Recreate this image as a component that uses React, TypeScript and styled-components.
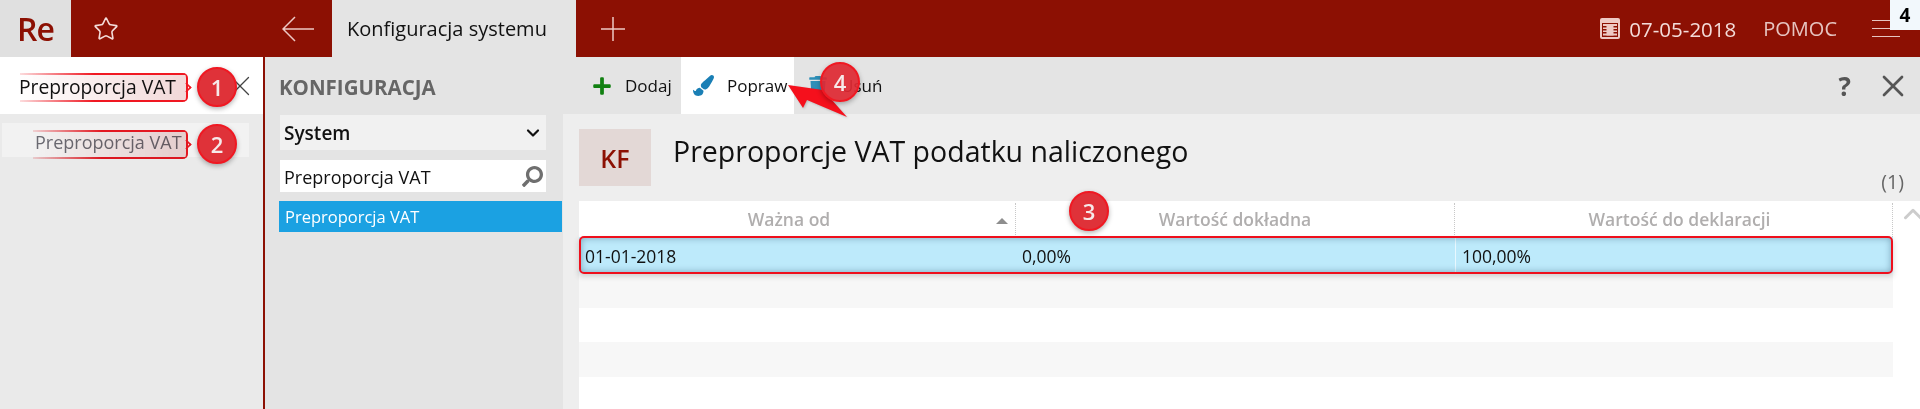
import React from 'react';
import styled, { createGlobalStyle } from 'styled-components';
import { ChevronDown, ChevronUp, Star, X } from 'lucide-react';
import { FaPaintBrush, FaPlus, FaSearch, FaTrash } from 'react-icons/fa';

const FONT = '"Open Sans", "Noto Sans", sans-serif';
const MAROON = '#8c1003';
const CALLOUT_RED = '#f01822';

const GlobalStyle = createGlobalStyle`
  html, body {
    margin: 0;
    padding: 0;
    height: 409px;
    overflow: hidden;
    background: #fff;
  }
  * { box-sizing: border-box; }
`;

const Page = styled.div`
  position: relative;
  width: 1920px;
  height: 409px;
  overflow: hidden;
  display: flex;
  flex-direction: column;
  font-family: ${FONT};
`;

const TopBar = styled.header`
  height: 57px;
  display: flex;
  align-items: center;
  flex-shrink: 0;
  background: ${MAROON};
  color: #f3dcd9;
`;

const Logo = styled.div`
  width: 71px;
  height: 100%;
  display: flex;
  align-items: center;
  justify-content: center;
  background: #e0e0e0;
  color: ${MAROON};
  font-size: 32px;
  font-weight: 600;
  letter-spacing: -1px;
`;

const StarSlot = styled.div`
  width: 70px;
  height: 100%;
  display: flex;
  align-items: center;
  justify-content: center;
  margin-right: 129px;
`;

const BackSlot = styled.div`
  width: 62px;
  height: 100%;
  display: flex;
  align-items: center;
  justify-content: center;
  padding-right: 7px;
`;

const Tab = styled.div`
  width: 244px;
  height: 100%;
  display: flex;
  align-items: center;
  padding-left: 15px;
  background: #e4e4e4;
  color: #111;
  font-size: 20px;
  font-weight: 400;
  white-space: nowrap;
`;

const PlusSlot = styled.div`
  width: 74px;
  height: 100%;
  display: flex;
  align-items: center;
  justify-content: center;
`;

const TopRight = styled.div`
  margin-left: auto;
  height: 100%;
  display: flex;
  align-items: center;
  position: relative;
`;

const DateText = styled.span`
  font-size: 20.5px;
  margin-left: 9px;
  margin-right: 27px;
`;

const HelpLink = styled.span`
  font-size: 20px;
  color: #e6c4c0;
  margin-right: 35px;
`;

const Burger = styled.div`
  width: 28px;
  margin-right: 20px;
  display: flex;
  flex-direction: column;
  gap: 6.5px;
  & > i {
    display: block;
    height: 1.5px;
    background: #e6c4c0;
  }
`;

const CornerMark = styled.div`
  position: absolute;
  top: 0;
  right: 0;
  width: 30px;
  height: 30px;
  display: flex;
  align-items: center;
  justify-content: center;
  background: #f2f8fc;
  color: #000;
  font-size: 19px;
  font-weight: 700;
`;

const Body = styled.div`
  flex: 1;
  display: flex;
  min-height: 0;
`;

const LeftPanel = styled.aside`
  width: 265px;
  flex-shrink: 0;
  background: #eaeaea;
  border-right: 2px solid ${MAROON};
`;

const LeftSearch = styled.div`
  height: 57px;
  display: flex;
  align-items: center;
  justify-content: space-between;
  padding: 1px 6px 0 19px;
  background: #fff;
  color: #111;
  font-size: 19.3px;
  white-space: nowrap;
`;

const LeftResult = styled.div`
  height: 34px;
  margin: 9px 14px 0 2px;
  padding: 3px 0 0 33px;
  display: flex;
  align-items: center;
  background: #f2f2f2;
  color: #6a6a72;
  font-size: 18px;
`;

const MiddlePanel = styled.nav`
  width: 298px;
  flex-shrink: 0;
  padding: 0 1px 0 14px;
  background: #e4e4e4;
`;

const PanelTitle = styled.div`
  height: 58px;
  padding-top: 2px;
  display: flex;
  align-items: center;
  font-size: 20.5px;
  font-weight: 700;
  color: #666;
`;

const SystemSelect = styled.div`
  width: 266px;
  height: 35px;
  display: flex;
  align-items: center;
  justify-content: space-between;
  padding: 1px 3px 0 4px;
  margin-left: 1px;
  background: #f1f1f1;
  color: #111;
  font-size: 19px;
  font-weight: 600;
`;

const TreeSearch = styled.div`
  width: 266px;
  height: 32px;
  margin: 10px 0 9px 1px;
  padding: 1px 3px 0 4px;
  display: flex;
  align-items: center;
  justify-content: space-between;
  background: #fff;
  color: #111;
  font-size: 18px;
`;

const TreeItem = styled.div`
  height: 31px;
  display: flex;
  align-items: center;
  padding-left: 6px;
  background: #1ba1e2;
  color: #fff;
  font-size: 16.5px;
`;

const Main = styled.main`
  flex: 1;
  min-width: 0;
  display: flex;
  flex-direction: column;
  background: #eeeeee;
`;

const Toolbar = styled.div`
  height: 57px;
  flex-shrink: 0;
  display: flex;
  align-items: stretch;
  background: #e4e4e4;
  padding-left: 18px;
`;

const ToolButton = styled.div<{ $active?: boolean; $width: number; $inset: number }>`
  width: ${(p) => p.$width}px;
  display: flex;
  align-items: center;
  gap: 13px;
  padding-left: ${(p) => p.$inset}px;
  background: ${(p) => (p.$active ? '#fff' : 'transparent')};
  color: #111;
  font-size: 17px;
`;

const ToolEnd = styled.div`
  margin-left: auto;
  display: flex;
  align-items: center;
  gap: 24px;
  padding-right: 9px;
  color: #555;
  font-size: 26px;
  font-weight: 700;
`;

const Heading = styled.div`
  height: 72px;
  flex-shrink: 0;
  display: flex;
  align-items: center;
  gap: 22px;
  padding: 15px 0 0 16px;
`;

const Monogram = styled.div`
  width: 72px;
  height: 57px;
  display: flex;
  align-items: center;
  justify-content: center;
  background: #e3d8d6;
  color: ${MAROON};
  font-size: 25px;
  font-weight: 600;
`;

const Title = styled.h1`
  margin: 0 0 13px;
  color: #111;
  font-size: 28.5px;
  font-weight: 400;
  white-space: nowrap;
`;

const CountRow = styled.div`
  height: 29px;
  margin-top: -14px;
  display: flex;
  align-items: flex-start;
  justify-content: flex-end;
  padding-right: 16px;
  line-height: 20px;
  color: #666;
  font-size: 19.5px;
`;

const TableWrap = styled.div`
  flex: 1;
  display: flex;
  margin-left: 16px;
  min-height: 0;
  background: #fff;
`;

const Table = styled.div`
  position: relative;
  width: 1314px;
  flex-shrink: 0;
`;

const Grid = styled.div<{ $h: number; $tint?: boolean; $selected?: boolean }>`
  display: grid;
  grid-template-columns: 437px 439px 438px;
  height: ${(p) => p.$h}px;
  background: ${(p) => (p.$selected ? '#bdeafb' : p.$tint ? '#f7f7f7' : '#fff')};
`;

const HeadCell = styled.div<{ $shift?: number }>`
  position: relative;
  display: flex;
  align-items: center;
  justify-content: center;
  padding-left: ${(p) => (p.$shift && p.$shift > 0 ? p.$shift : 0)}px;
  padding-right: ${(p) => (p.$shift && p.$shift < 0 ? -p.$shift : 0)}px;
  padding-bottom: 2px;
  color: #b0aeae;
  font-size: 17.5px;
  font-weight: 600;
  margin-top: 2px;
  border-right: 1px dotted #c8c8c8;
`;

const SortMark = styled.span`
  position: absolute;
  right: 7px;
  top: 15px;
  width: 0;
  height: 0;
  border-left: 6px solid transparent;
  border-right: 6px solid transparent;
  border-bottom: 6px solid #8e8e8e;
`;

const Cell = styled.div<{ $rule?: boolean }>`
  display: flex;
  align-items: center;
  padding: 2px 0 0 6px;
  color: #111;
  font-size: 17.5px;
  border-left: ${(p) => (p.$rule ? '1px solid #e8f8ff' : 'none')};
`;

const SelectedRow = styled(Grid)`
  position: relative;
  box-shadow: 0 3px 6px rgba(0, 0, 0, 0.18);
  z-index: 1;
  &::after {
    content: '';
    position: absolute;
    inset: -1px 0 -1px 0;
    border: 2px solid #ee0f1c;
    border-radius: 5px;
    box-shadow: inset 0 0 7px rgba(0, 40, 70, 0.35);
  }
`;

const ScrollSide = styled.div`
  flex: 1;
  display: flex;
  align-items: flex-start;
  justify-content: center;
  padding-left: 5px;
  color: #cccccc;
`;

const ScrollUp = styled(ChevronUp)`
  margin-top: -2px;
`;

const Badge = styled.div<{ $x: number; $y: number; $faded?: boolean }>`
  position: absolute;
  left: ${(p) => p.$x - 20}px;
  top: ${(p) => p.$y - 20}px;
  width: 40px;
  height: 40px;
  display: flex;
  align-items: center;
  justify-content: center;
  border-radius: 50%;
  border: 2px solid ${CALLOUT_RED};
  background: ${(p) => (p.$faded ? 'rgba(222, 40, 50, 0.92)' : '#df3239')};
  box-shadow: 0 2px 5px rgba(0, 0, 0, 0.3);
  color: #f6eaea;
  font-size: 22px;
  font-weight: 600;
  z-index: 5;
`;

const Callout = styled.div<{ $x: number; $y: number; $w: number }>`
  position: absolute;
  left: ${(p) => p.$x}px;
  top: ${(p) => p.$y}px;
  width: ${(p) => p.$w}px;
  height: 29px;
  border-right: 2px solid ${CALLOUT_RED};
  border-radius: 0 5px 5px 0;
  background:
    linear-gradient(90deg, rgba(240, 24, 34, 0.15), ${CALLOUT_RED} 45%) top / 100% 2px no-repeat,
    linear-gradient(90deg, rgba(240, 24, 34, 0.15), ${CALLOUT_RED} 45%) bottom / 100% 2px no-repeat,
    linear-gradient(90deg, rgba(240, 170, 170, 0), rgba(236, 200, 200, 0.7));
  mix-blend-mode: multiply;
  z-index: 4;
  &::after {
    content: '';
    position: absolute;
    right: -5px;
    top: 10px;
    width: 7px;
    height: 7px;
    border-top: 2px solid ${CALLOUT_RED};
    border-right: 2px solid ${CALLOUT_RED};
    transform: rotate(45deg) scale(0.8);
  }
`;

const ArrowLayer = styled.svg`
  position: absolute;
  left: 780px;
  top: 78px;
  z-index: 4;
  filter: drop-shadow(1px 1px 1px rgba(0, 0, 0, 0.2));
`;

function ThinArrow() {
  return (
    <svg width="32" height="26" viewBox="0 0 32 26" fill="none" stroke="#edc9c5" strokeWidth="1.5">
      <path d="M1 13H32M13 1 1 13l12 12" />
    </svg>
  );
}

function ThinPlus() {
  return (
    <svg width="24" height="24" viewBox="0 0 24 24" fill="none" stroke="#edc9c5" strokeWidth="1.5">
      <path d="M12 0v24M0 12h24" />
    </svg>
  );
}

function CalendarIcon() {
  return (
    <svg width="20" height="21" viewBox="0 0 20 21">
      <rect width="20" height="21" rx="2" fill="#eec9c5" />
      <rect x="2" y="5" width="16" height="14" fill={MAROON} />
      <g fill="#eec9c5">
        <rect x="3" y="6" width="14" height="2" />
        <rect x="3" y="9.5" width="14" height="1.5" />
        <rect x="3" y="12.5" width="14" height="1.5" />
        <rect x="3" y="15.5" width="14" height="2" />
        <rect x="6.5" y="6" width="7" height="11.5" />
      </g>
    </svg>
  );
}

const rows = [true, false, true, false, false];

export default function App() {
  return (
    <Page>
      <GlobalStyle />
      <TopBar>
        <Logo>Re</Logo>
        <StarSlot>
          <Star size={26} strokeWidth={1.5} color="#f3dcd9" />
        </StarSlot>
        <BackSlot>
          <ThinArrow />
        </BackSlot>
        <Tab>Konfiguracja systemu</Tab>
        <PlusSlot>
          <ThinPlus />
        </PlusSlot>
        <TopRight>
          <CalendarIcon />
          <DateText>07-05-2018</DateText>
          <HelpLink>POMOC</HelpLink>
          <Burger>
            <i />
            <i />
            <i />
          </Burger>
          <CornerMark>4</CornerMark>
        </TopRight>
      </TopBar>
      <Body>
        <LeftPanel>
          <LeftSearch>
            Preproporcja VAT
            <X size={34} strokeWidth={0.9} color="#444" />
          </LeftSearch>
          <LeftResult>Preproporcja VAT</LeftResult>
        </LeftPanel>
        <MiddlePanel>
          <PanelTitle>KONFIGURACJA</PanelTitle>
          <SystemSelect>
            System
            <ChevronDown size={20} strokeWidth={2.6} color="#111" />
          </SystemSelect>
          <TreeSearch>
            Preproporcja VAT
            <FaSearch size={21} color="#6f6f6f" style={{ transform: 'scaleX(-1)' }} />
          </TreeSearch>
          <TreeItem>Preproporcja VAT</TreeItem>
        </MiddlePanel>
        <Main>
          <Toolbar>
            <ToolButton $width={100} $inset={11}>
              <FaPlus size={20} color="#118011" />
              Dodaj
            </ToolButton>
            <ToolButton $active $width={113} $inset={12}>
              <FaPaintBrush size={21} color="#1a7fb5" />
              Popraw
            </ToolButton>
            <ToolButton $width={100} $inset={14}>
              <FaTrash size={20} color="#2d8fb8" />
              Usuń
            </ToolButton>
            <ToolEnd>
              <span>?</span>
              <X size={36} strokeWidth={1.8} color="#555" />
            </ToolEnd>
          </Toolbar>
          <Heading>
            <Monogram>KF</Monogram>
            <Title>Preproporcje VAT podatku naliczonego</Title>
          </Heading>
          <CountRow>(1)</CountRow>
          <TableWrap>
            <Table>
              <Grid $h={36}>
                <HeadCell $shift={-16}>
                  Ważna od
                  <SortMark />
                </HeadCell>
                <HeadCell>Wartość dokładna</HeadCell>
                <HeadCell $shift={12}>Wartość do deklaracji</HeadCell>
              </Grid>
              <SelectedRow $h={36} $selected>
                <Cell>01-01-2018</Cell>
                <Cell>0,00%</Cell>
                <Cell $rule>100,00%</Cell>
              </SelectedRow>
              {rows.map((tint, i) => (
                <Grid key={i} $h={34.5} $tint={tint} />
              ))}
            </Table>
            <ScrollSide>
              <ScrollUp size={30} strokeWidth={2.4} />
            </ScrollSide>
          </TableWrap>
        </Main>
      </Body>
      <Callout $x={20} $y={73} $w={168} />
      <Callout $x={33} $y={130} $w={155} />
      <Badge $x={217} $y={87}>1</Badge>
      <Badge $x={217} $y={144}>2</Badge>
      <Badge $x={1089} $y={211}>3</Badge>
      <ArrowLayer width="70" height="42" viewBox="780 78 70 42">
        <polygon points="788,85 823,90 847,117 807,100 803,108" fill="#f5101c" />
      </ArrowLayer>
      <Badge $x={840} $y={82} $faded>4</Badge>
    </Page>
  );
}
